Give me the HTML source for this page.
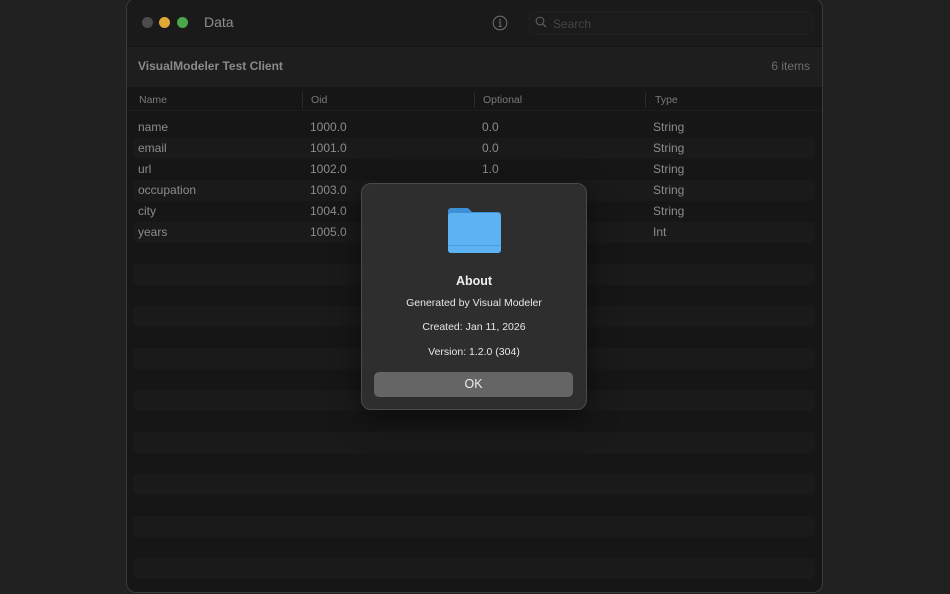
<!DOCTYPE html>
<html><head><meta charset="utf-8"><style>
*{margin:0;padding:0;box-sizing:border-box}
body{width:950px;height:594px;background:#212121;font-family:"Liberation Sans",sans-serif;position:relative;overflow:hidden}
.win{position:absolute;left:126px;top:-2px;width:697px;height:595px;background:#161616;border:1px solid #3a3a3a;border-radius:10px;overflow:hidden}
.tb{position:absolute;left:0;top:0;width:100%;height:48px;background:#1a1a1a;border-bottom:1px solid #121212}
.dot{position:absolute;top:18px;width:11px;height:11px;border-radius:50%}
.t{position:absolute;color:#8a8a8a;font-size:12px}
.hdr{position:absolute;left:0;top:48px;width:100%;height:40px;background:#1e1e1e}
.stripe{position:absolute;left:6px;width:682px;height:21px;background:#1a1a1a;border-radius:4px}
.cell{position:absolute;color:#8c8c8c;font-size:12px;line-height:21px}
.sep{position:absolute;top:93px;width:1px;height:16px;background:#2a2a2a}
.modal{position:absolute;left:361px;top:183px;width:226px;height:227px;background:#2e2e2e;border:1px solid #4a4a4a;border-radius:10px;box-shadow:0 8px 30px rgba(0,0,0,.5)}
.mt{position:absolute;left:0;width:100%;text-align:center;color:#e6e6e6;font-size:10.5px}
</style></head><body>
<div class="win">
 <div class="tb">
  <div class="dot" style="left:15px;background:#4c4c4c"></div>
  <div class="dot" style="left:32px;background:#e0a837"></div>
  <div class="dot" style="left:50px;background:#4aa84a"></div>
  <div class="t" style="left:77px;top:15px;font-size:14px;color:#8e8e8e">Data</div>
  <svg style="position:absolute;left:365px;top:16px" width="16" height="16" viewBox="0 0 16 16"><circle cx="8" cy="8" r="6.8" fill="none" stroke="#6a6a6a" stroke-width="1.1"/><circle cx="8" cy="4.8" r=".9" fill="#6a6a6a"/><path d="M6.6 7h1.6v4.3M6.6 11.5h3" stroke="#6a6a6a" stroke-width="1.1" fill="none"/></svg>
  <div style="position:absolute;left:402px;top:12px;width:284px;height:24px;background:#1b1b1b;border:1px solid #202020;border-radius:6px"></div>
  <svg style="position:absolute;left:408px;top:17px" width="12" height="12" viewBox="0 0 12 12"><circle cx="5" cy="5" r="3.8" fill="none" stroke="#5a5a5a" stroke-width="1.2"/><path d="M7.8 7.8L11 11" stroke="#5a5a5a" stroke-width="1.3"/></svg>
  <div class="t" style="left:426px;top:18px;font-size:12px;color:#444">Search</div>
 </div>
 <div class="hdr">
  <div class="t" style="left:11px;top:12px;font-size:12px;font-weight:bold;color:#8a8a8a">VisualModeler Test Client</div>
  <div class="t" style="right:12px;top:12px;font-size:12px;color:#6e6e6e">6 items</div>
 </div>
 <div class="t" style="left:12px;top:95px;font-size:10.5px;color:#7a7a7a">Name</div>
 <div class="sep" style="left:175px"></div>
 <div class="t" style="left:184px;top:95px;font-size:10.5px;color:#7a7a7a">Oid</div>
 <div class="sep" style="left:347px"></div>
 <div class="t" style="left:356px;top:95px;font-size:10.5px;color:#7a7a7a">Optional</div>
 <div class="sep" style="left:518px"></div>
 <div class="t" style="left:528px;top:95px;font-size:10.5px;color:#7a7a7a">Type</div>
 <div style="position:absolute;left:0;top:111px;width:100%;height:1px;background:#1c1c1c"></div>
 <div class="stripe" style="top:139px"></div><div class="stripe" style="top:181px"></div><div class="stripe" style="top:223px"></div><div class="stripe" style="top:265px"></div><div class="stripe" style="top:307px"></div><div class="stripe" style="top:349px"></div><div class="stripe" style="top:391px"></div><div class="stripe" style="top:433px"></div><div class="stripe" style="top:475px"></div><div class="stripe" style="top:517px"></div><div class="stripe" style="top:559px"></div>
 <div class="cell" style="left:11px;top:118px">name<br>email<br>url<br>occupation<br>city<br>years</div>
 <div class="cell" style="left:183px;top:118px">1000.0<br>1001.0<br>1002.0<br>1003.0<br>1004.0<br>1005.0</div>
 <div class="cell" style="left:355px;top:118px">0.0<br>0.0<br>1.0</div>
 <div class="cell" style="left:526px;top:118px">String<br>String<br>String<br>String<br>String<br>Int</div>
</div>
<div class="modal">
 <svg style="position:absolute;left:86px;top:23px" width="53" height="46" viewBox="0 0 53 46"><path d="M3 1h16a3 3 0 0 1 2 1l3 3h26a3 3 0 0 1 3 3v35a3 3 0 0 1-3 3H3a3 3 0 0 1-3-3V4a3 3 0 0 1 3-3z" fill="#3d8fd6"/><path d="M3 6h47a3 3 0 0 1 3 3v34a3 3 0 0 1-3 3H3a3 3 0 0 1-3-3V9a3 3 0 0 1 3-3z" fill="#5db3f2"/><rect x="0" y="38" width="53" height="1" fill="#4a9fe0"/></svg>
 <div class="mt" style="top:90px;font-size:12.5px;font-weight:bold;color:#eee">About</div>
 <div class="mt" style="top:113px">Generated by Visual Modeler</div>
 <div class="mt" style="top:137px">Created: Jan 11, 2026</div>
 <div class="mt" style="top:162px">Version: 1.2.0 (304)</div>
 <div style="position:absolute;left:12px;top:188px;width:199px;height:25px;background:#656565;border-radius:5px;color:#eee;font-size:12.5px;text-align:center;line-height:25px">OK</div>
</div>
</body></html>
